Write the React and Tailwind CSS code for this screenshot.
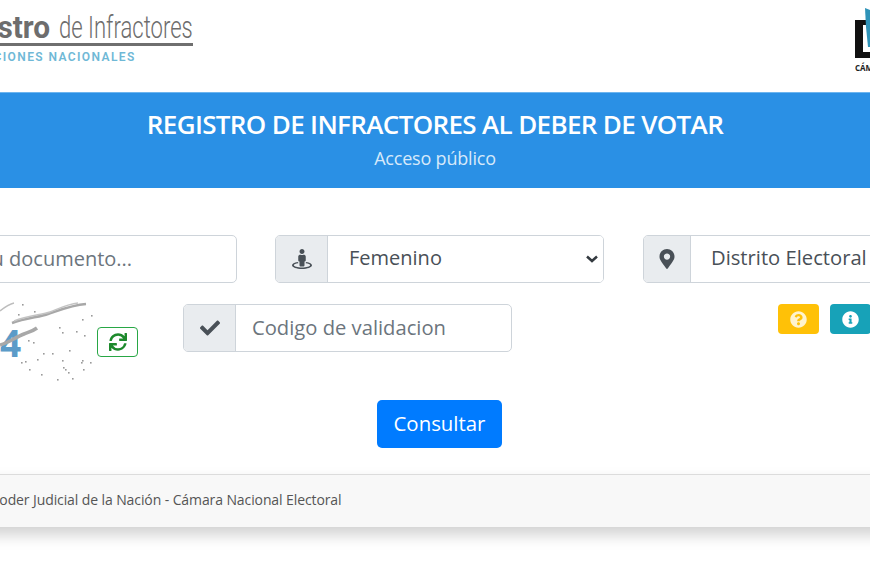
import React from 'react';
import { FaStreetView, FaMapMarkerAlt, FaCheck, FaSync, FaQuestionCircle, FaInfoCircle } from 'react-icons/fa';

const captchaDots = [
  [18, 314], [22, 304], [34, 311], [59, 327], [62, 332], [76, 331], [82, 319], [91, 315], [84, 335],
  [69, 350], [28, 340], [33, 342], [43, 353], [52, 353], [37, 359], [25, 361], [21, 362], [62, 360],
  [82, 360], [90, 362], [83, 369], [63, 367], [68, 372], [41, 374], [29, 369], [72, 378], [57, 379],
  [81, 362], [65, 369]
];

const Addon = ({ className, children }) => (
  <div className={`flex items-center justify-center bg-[#e9ecef] border-r border-[#ced4da] text-[#495057] ${className}`}>
    {children}
  </div>
);

const Captcha = () => (
  <svg className="w-[96px] h-[80px] shrink-0" viewBox="0 302 96 80">
    <text x="0" y="357" fontSize="37" fontWeight="700" fill="#5b9bc8" fontFamily="Open Sans, sans-serif">4</text>
    <path d="M12 323 C26 318 40 317 48 314 C60 310 72 305 86 304" fill="none" stroke="#a8a8a8" strokeWidth="2.5" />
    <path d="M14 321 C28 315 42 315 50 312 C60 308 68 304 78 303" fill="none" stroke="#c4c4c4" strokeWidth="1.5" />
    <path d="M0 311 C5 307 9 304 14 303" fill="none" stroke="#bdbdbd" strokeWidth="1.5" />
    <path d="M0 345 C8 343 16 337 24 334 C29 332 33 331 37 328" fill="none" stroke="#a8a8a8" strokeWidth="3.5" />
    {captchaDots.map(([x, y]) => (
      <rect key={`${x}-${y}`} x={x} y={y} width="1.6" height="1.6" fill="#9a9a9a" />
    ))}
  </svg>
);

const App = () => {
  return (
    <div className="w-[870px] h-[580px] overflow-hidden bg-white text-[#495057] font-['Open_Sans',sans-serif]">
      {/* Logos */}
      <header className="h-[92px] flex justify-between">
        <div className="-ml-[62px] pt-[11px] w-[255px] shrink-0">
          <div className="h-[35px] border-b-[3px] border-[#6f6f6f] flex justify-end">
            <div className="shrink-0 origin-right scale-x-[0.69] text-[#6d6d6d] text-[32px] leading-[33px] whitespace-nowrap font-['Roboto',sans-serif] font-light">
              <span className="inline-block origin-right scale-x-[1.35] mr-[5px] font-bold">Registro</span> de Infractores
            </div>
          </div>
          <div className="mt-[3px] pl-[22px] text-[12px] leading-[16px] font-semibold tracking-[1.4px] text-[#6fb8d6] whitespace-nowrap font-['Roboto',sans-serif]">
            ELECCIONES NACIONALES
          </div>
        </div>
        <div className="w-[15px] pt-[7px] overflow-hidden shrink-0">
          <svg className="w-[15px] h-[52px]" viewBox="0 0 15 52">
            <path d="M0 13 H13 V18 H8 V45 H15 V51 H0 Z" fill="#111" />
            <path d="M10 1 L15 3 V40 H13 L11 20 Z" fill="#2f93b8" />
          </svg>
          <div className="mt-[4px] text-[8px] leading-[10px] font-bold text-[#222] whitespace-nowrap">CÁMARA</div>
        </div>
      </header>

      {/* Title band */}
      <div className="h-[96px] bg-[#2a90e5] border-t border-[#6db5ef] text-center pt-[14px]">
        <h1 className="text-[26px] leading-[34px] font-semibold tracking-[-0.65px] text-white">REGISTRO DE INFRACTORES AL DEBER DE VOTAR</h1>
        <p className="mt-[5px] text-[18px] leading-[24px] tracking-[-0.2px] text-[#d6e9fa]">Acceso público</p>
      </div>

      {/* First row */}
      <div className="mt-[47px] flex -ml-[100px] w-[1100px]">
        <input
          className="w-[337px] h-[48px] pl-[7px] pb-[2px] border border-[#ced4da] rounded-[5px] text-[20px] placeholder:text-[#6c757d] outline-none shrink-0"
          placeholder="Ingrese su documento..."
        />
        <div className="ml-[38px] w-[329px] h-[48px] flex border border-[#ced4da] rounded-[5px] overflow-hidden relative shrink-0">
          <Addon className="w-[52px]"><FaStreetView className="text-[20px]" /></Addon>
          <select className="flex-1 appearance-none pl-[21px] pb-[2px] text-[20px] bg-white outline-none" defaultValue="F">
            <option value="F">Femenino</option>
            <option value="M">Masculino</option>
          </select>
          <svg className="absolute right-[5px] top-[19px] w-[12px] h-[8px]" viewBox="0 0 12 8">
            <path d="M1 1.5 L6 6 L11 1.5" fill="none" stroke="#343a40" strokeWidth="2.5" />
          </svg>
        </div>
        <div className="ml-[39px] w-[329px] h-[48px] flex border border-[#ced4da] rounded-[5px] overflow-hidden shrink-0">
          <Addon className="w-[47px]"><FaMapMarkerAlt className="text-[20px]" /></Addon>
          <div className="flex-1 flex items-center pl-[20px] pb-[3px] text-[20.2px] whitespace-nowrap">Distrito Electoral</div>
        </div>
      </div>

      {/* Captcha row */}
      <div className="mt-[21px] flex items-start h-[96px]">
        <div className="-mt-[2px]"><Captcha /></div>
        <button className="mt-[23px] ml-[1px] w-[41px] h-[30px] flex items-center justify-center border border-[#28a745] rounded-[4px] text-[#1d8a2c] bg-white shrink-0">
          <FaSync className="text-[18px]" />
        </button>
        <div className="ml-[45px] w-[329px] h-[48px] flex border border-[#ced4da] rounded-[5px] overflow-hidden shrink-0">
          <Addon className="w-[52px]"><FaCheck className="text-[20px]" /></Addon>
          <input
            className="flex-1 min-w-0 pl-[16px] pb-[2px] text-[20.2px] placeholder:text-[#6c757d] outline-none"
            placeholder="Codigo de validacion"
          />
        </div>
        <button className="ml-[266px] w-[41px] h-[30px] flex items-center justify-center rounded-[4px] bg-[#ffc107] text-[#fff3cd] shrink-0">
          <FaQuestionCircle className="text-[17px]" />
        </button>
        <button className="ml-[11px] w-[41px] h-[30px] flex items-center justify-center rounded-[4px] bg-[#17a2b8] text-white shrink-0">
          <FaInfoCircle className="text-[17px]" />
        </button>
      </div>

      {/* Submit */}
      <div className="flex justify-center">
        <button className="ml-[9px] w-[125px] h-[48px] pb-[2px] rounded-[5px] bg-[#007bff] text-white text-[20.4px]">Consultar</button>
      </div>

      {/* Footer */}
      <footer className="mt-[26px] h-[53px] pb-[3px] bg-[#f8f8f8] border-t border-[#dcdcdc] shadow-[0_8px_14px_rgba(0,0,0,0.18)] flex items-center -ml-[40px] pl-[31px] w-[930px]">
        <span className="text-[14px] tracking-[-0.1px] text-[#555] whitespace-nowrap">Poder Judicial de la Nación - Cámara Nacional Electoral</span>
      </footer>
    </div>
  );
};

export default App;
